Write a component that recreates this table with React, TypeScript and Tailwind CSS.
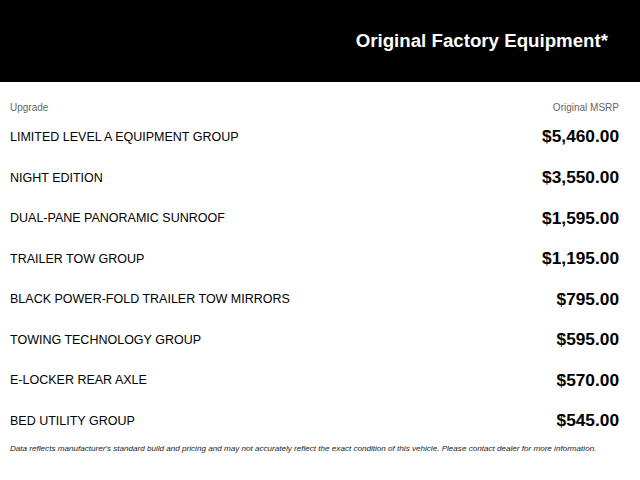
import React from 'react';

const items = [
  { name: 'LIMITED LEVEL A EQUIPMENT GROUP', price: '$5,460.00' },
  { name: 'NIGHT EDITION', price: '$3,550.00' },
  { name: 'DUAL-PANE PANORAMIC SUNROOF', price: '$1,595.00' },
  { name: 'TRAILER TOW GROUP', price: '$1,195.00' },
  { name: 'BLACK POWER-FOLD TRAILER TOW MIRRORS', price: '$795.00' },
  { name: 'TOWING TECHNOLOGY GROUP', price: '$595.00' },
  { name: 'E-LOCKER REAR AXLE', price: '$570.00' },
  { name: 'BED UTILITY GROUP', price: '$545.00' },
];

export default function App() {
  return (
    <div className="w-[640px] h-[480px] bg-white overflow-hidden font-['Liberation_Sans',Arial,sans-serif] text-black">
      {/* Header */}
      <div className="h-[82px] bg-black flex items-center justify-end pr-[32px]">
        <h1 className="text-white text-[18.7px] font-bold">Original Factory Equipment*</h1>
      </div>

      <div className="pl-[10px] pr-[21px] pt-[15px]">
        {/* Column labels */}
        <div className="h-[20px] flex items-center justify-between text-[10px] text-[#666]">
          <span>Upgrade</span>
          <span>Original MSRP</span>
        </div>

        {/* Rows */}
        {items.map((item) => (
          <div key={item.name} className="h-[40.6px] flex items-center justify-between">
            <span className="text-[12.5px]">{item.name}</span>
            <span className="text-[17.3px] font-bold">{item.price}</span>
          </div>
        ))}

        <p className="mt-[1px] text-[8.1px] italic text-[#222] leading-[12px] whitespace-nowrap">
          Data reflects manufacturer's standard build and pricing and may not accurately reflect the exact condition of this vehicle. Please contact dealer for more information.
        </p>
      </div>
    </div>
  );
}
